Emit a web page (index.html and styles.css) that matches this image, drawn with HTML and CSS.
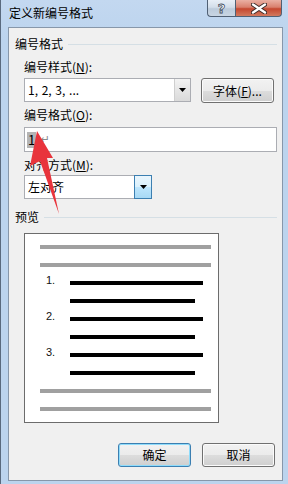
FILE: index.html
```html
<!DOCTYPE html>
<html lang="zh-CN">
<head>
<meta charset="utf-8">
<title>定义新编号格式</title>
<link rel="stylesheet" href="styles.css">
</head>
<body>
<div class="window">
  <div class="titlebar">
    <span class="title">定义新编号格式</span>
    <div class="caption-btns">
      <div class="cap help"><span>?</span></div>
      <div class="cap close">
        <svg width="16" height="11" viewBox="0 0 16 11"><path d="M2 1.5 L14 9.5 M14 1.5 L2 9.5" stroke="#3b2a28" stroke-width="4.2" stroke-linecap="round"/><path d="M2 1.5 L14 9.5 M14 1.5 L2 9.5" stroke="#fff" stroke-width="2.4" stroke-linecap="round"/></svg>
      </div>
    </div>
  </div>
  <div class="client">
    <div class="group-head"><span>编号格式</span><i class="rule"></i></div>

    <div class="field f-style">
      <div class="label">编号样式(<u>N</u>):</div>
      <div class="row">
        <div class="combo combo-style">
          <span class="val">1, 2, 3, ...</span>
          <span class="drop"><svg width="7" height="4" viewBox="0 0 7 4"><path d="M0 0H7L3.5 4Z" fill="#000"/></svg></span>
        </div>
        <div class="btn btn-font">字体(<u>F</u>)...</div>
      </div>
    </div>

    <div class="field f-format">
      <div class="label">编号格式(<u>O</u>):</div>
      <div class="textbox"><span class="sel">1</span>.<span class="pm">↵</span></div>
    </div>

    <div class="field f-align">
      <div class="label">对齐方式(<u>M</u>):</div>
      <div class="combo combo-align">
        <span class="val">左对齐</span>
        <span class="drop hot"><svg width="7" height="4" viewBox="0 0 7 4"><path d="M0 0H7L3.5 4Z" fill="#000"/></svg></span>
      </div>
    </div>

    <div class="group-head preview-head"><span>预览</span><i class="rule"></i></div>

    <div class="field">
      <div class="preview">
        <div class="pline"><i class="bar gray"></i></div>
        <div class="pline"><i class="bar gray"></i></div>
        <div class="pline"><span class="num">1.</span><i class="bar long"></i></div>
        <div class="pline"><span class="num"></span><i class="bar short"></i></div>
        <div class="pline"><span class="num">2.</span><i class="bar long"></i></div>
        <div class="pline"><span class="num"></span><i class="bar short"></i></div>
        <div class="pline"><span class="num">3.</span><i class="bar long"></i></div>
        <div class="pline"><span class="num"></span><i class="bar short"></i></div>
        <div class="pline"><i class="bar gray"></i></div>
        <div class="pline"><i class="bar gray"></i></div>
      </div>
    </div>

    <div class="actions">
      <div class="btn btn-default">确定</div>
      <div class="btn">取消</div>
    </div>
  </div>

  <svg class="arrow" width="288" height="484" viewBox="0 0 288 484">
    <polygon points="37,131 53,158 47,158 59,214 40,161 30,166" fill="#e8343c"/>
  </svg>
</div>
</body>
</html>
```

FILE: styles.css
```css
html, body {
  margin: 0;
  padding: 0;
}
body {
  width: 288px;
  height: 484px;
  overflow: hidden;
  background: #bcd4ee;
  font-family: "Noto Sans CJK SC", "Liberation Sans", sans-serif;
  font-size: 12px;
  color: #000;
}
.window {
  position: relative;
  height: 484px;
  box-sizing: border-box;
  display: flex;
  flex-direction: column;
  border-left: 1px solid #5a6a7e;
  background: linear-gradient(#c3d8f0, #bcd4ee 40px);
}
.titlebar {
  height: 27px;
  flex: none;
  display: flex;
  justify-content: space-between;
  align-items: flex-start;
}
.title {
  padding: 5px 0 0 8px;
  line-height: 16px;
}
.caption-btns {
  display: flex;
  margin-right: 6px;
}
.cap {
  height: 17px;
  box-sizing: border-box;
  border: 1px solid #506074;
  border-top: none;
  display: flex;
  align-items: center;
  justify-content: center;
}
.help {
  width: 28px;
  border-right: none;
  border-radius: 0 0 0 4px;
  background: linear-gradient(#e8eff7, #d3deea 45%, #bccbdb 55%, #c9d6e3);
}
.help span {
  font-family: "DejaVu Sans", sans-serif;
  font-weight: bold;
  font-size: 13px;
  line-height: 13px;
  color: #fff;
  -webkit-text-stroke: 0.8px #3f4d5e;
  margin-top: 1px;
}
.close {
  width: 47px;
  border-radius: 0 0 4px 0;
  background: linear-gradient(#eab0a3, #d9806d 45%, #c5472f 55%, #d27a5f);
}
.client {
  flex: 1;
  margin: 0 5px 3px 7px;
  border: 1px solid #8797aa;
  background: #f0f0f0;
  padding: 0 5px 0 6px;
  display: flex;
  flex-direction: column;
}
.group-head {
  display: flex;
  align-items: center;
  gap: 5px;
  line-height: 16px;
  margin-top: 8px;
}
.group-head .rule {
  flex: 1;
  height: 1px;
  background: #d5dfe5;
}
.preview-head {
  margin-top: 10px;
}
.field {
  margin-left: 9px;
}
.label {
  line-height: 16px;
}
.label u {
  text-decoration: underline;
}
.f-style {
  margin-top: 7px;
}
.f-style .row {
  display: flex;
  align-items: flex-start;
  margin-top: 3px;
}
.f-format {
  margin-top: 4px;
}
.f-format .textbox {
  margin-top: 4px;
}
.f-align {
  margin-top: 5px;
}
.f-align .combo {
  margin-top: 2px;
}
.combo {
  height: 24px;
  box-sizing: border-box;
  border: 1px solid #abadb3;
  background: #fff;
  display: flex;
  align-items: center;
}
.combo .val {
  flex: 1;
  padding-left: 3px;
  line-height: 16px;
}
.combo-style .val {
  word-spacing: 1px;
}
.combo-style {
  width: 167px;
}
.combo-align {
  width: 128px;
}
.drop {
  width: 15px;
  align-self: stretch;
  display: flex;
  align-items: center;
  justify-content: center;
  border-left: 1px solid #cfcfcf;
  background: linear-gradient(#f3f3f3, #e6e6e6 50%, #dadada);
}
.drop.hot {
  width: 16px;
  margin: -1px -1px -1px 0;
  border: 1px solid #3c7fb1;
  background: linear-gradient(#eaf6fd, #d9f0fc 50%, #bee6fd 50%, #a7d9f5);
}
.btn {
  width: 73px;
  height: 25px;
  box-sizing: border-box;
  border: 1px solid #707070;
  border-radius: 3px;
  background: linear-gradient(#f2f2f2, #ebebeb 50%, #dddddd 50%, #cfcfcf);
  box-shadow: inset 0 0 0 1px #fbfbfb;
  display: flex;
  align-items: center;
  justify-content: center;
  line-height: 16px;
}
.btn-font {
  margin-left: 10px;
}
.textbox {
  height: 25px;
  box-sizing: border-box;
  border: 1px solid #abadb3;
  background: #fff;
  display: flex;
  align-items: center;
  padding-left: 2px;
  line-height: 16px;
  font-size: 13px;
}
.textbox .sel {
  background: #b4b4b4;
  padding: 0 1px;
}
.textbox .pm {
  font-family: "DejaVu Sans", sans-serif;
  color: #8a8a8a;
  font-size: 11px;
  margin-left: 1px;
}
.preview {
  margin-top: 8px;
  width: 195px;
  box-sizing: border-box;
  border: 1px solid #6c6c6c;
  background: #fff;
  padding: 4px 0 4px 15px;
}
.pline {
  height: 18px;
  display: flex;
  align-items: center;
}
.bar {
  display: block;
  height: 4px;
}
.bar.gray {
  width: 171px;
  background: #a0a0a0;
}
.bar.long {
  width: 133px;
  background: #000;
}
.bar.short {
  width: 125px;
  background: #000;
}
.num {
  width: 24px;
  padding-left: 6px;
  font-family: "Liberation Sans", sans-serif;
  font-size: 11px;
  line-height: 12px;
  margin-bottom: 6px;
  color: #111;
}
.actions {
  margin-top: 20px;
  display: flex;
  justify-content: flex-end;
  gap: 11px;
  padding-right: 2px;
}
.actions .btn {
  height: 24px;
}
.btn-default {
  border-color: #3c7fb1;
  box-shadow: inset 0 0 0 1px #8fdcfb;
}
.arrow {
  position: absolute;
  left: -1px;
  top: 0;
  pointer-events: none;
}
```
